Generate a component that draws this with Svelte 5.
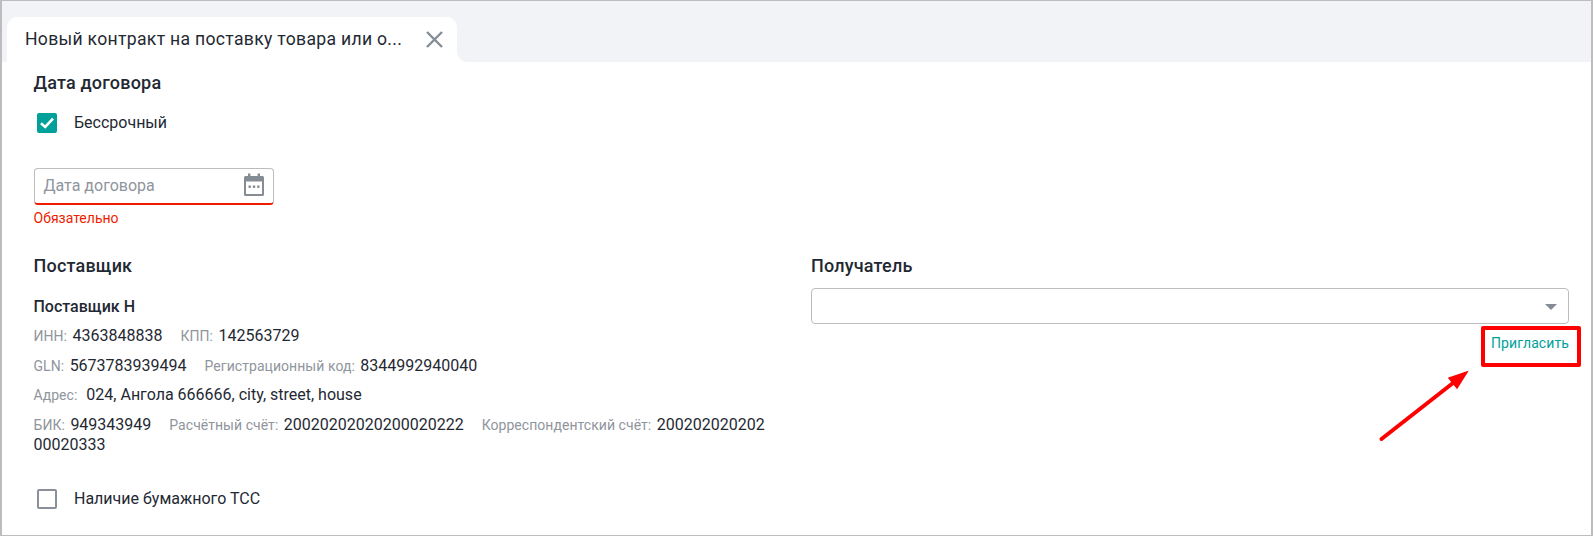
<script lang="ts">
	// Static recreation of the contract form
	const supplierRows = [
		[['ИНН:', '4363848838'], ['КПП:', '142563729']],
		[['GLN:', '5673783939494'], ['Регистрационный код:', '8344992940040']]
	];
</script>

<div class="frame">
	<div class="tabs">
		<div class="tab">
			<span class="tab-title">Новый контракт на поставку товара или о...</span>
			<svg class="close" width="17" height="17" viewBox="0 0 17 17" aria-hidden="true">
				<path d="M1 1 L16 16 M16 1 L1 16" stroke="#858d96" stroke-width="2.4" fill="none" />
			</svg>
		</div>
		<div class="tab-rest"></div>
	</div>

	<div class="content">
		<h3>Дата договора</h3>
		<label class="check term">
			<span class="box checked">
				<svg width="14" height="12" viewBox="0 0 14 12" aria-hidden="true">
					<path d="M1 6.2 L5.2 10 L13 1.6" stroke="#fff" stroke-width="2.6" fill="none" />
				</svg>
			</span>
			Бессрочный
		</label>

		<div class="date-input">
			<span class="placeholder">Дата договора</span>
			<svg width="22" height="24" viewBox="0 0 22 24" aria-hidden="true">
				<path d="M5 0.5h2.4v2.5h7.2V0.5H17v2.5h2.5A1.5 1.5 0 0 1 21 4.5v17a1.5 1.5 0 0 1-1.5 1.5h-17A1.5 1.5 0 0 1 1 21.5v-17A1.5 1.5 0 0 1 2.5 3H5z" fill="#868c94" />
				<rect x="3" y="8.5" width="16" height="12.5" fill="#fff" />
				<rect x="5.5" y="12.5" width="2.4" height="2.4" fill="#868c94" />
				<rect x="9.8" y="12.5" width="2.4" height="2.4" fill="#868c94" />
				<rect x="14.1" y="12.5" width="2.4" height="2.4" fill="#868c94" />
			</svg>
		</div>
		<div class="error">Обязательно</div>

		<div class="columns">
			<section>
				<h3>Поставщик</h3>
				<div class="supplier-name">Поставщик Н</div>
				{#each supplierRows as row}
					<div class="info-row">
						{#each row as [label, value]}
							<span class="pair"><span class="label">{label}</span> {value}</span>
						{/each}
					</div>
				{/each}
				<div class="info-row">
					<span class="pair"><span class="label address">Адрес:</span> 024, Ангола 666666, city, street, house</span>
				</div>
				<div class="info-row bank">
					<span class="pair"><span class="label">БИК:</span> 949343949</span>
					<span class="pair"><span class="label">Расчётный счёт:</span> 20020202020200020222</span>
					<span class="pair"><span class="label">Корреспондентский счёт:</span> <span class="long">20020202020200020333</span></span>
				</div>
			</section>
			<section>
				<h3>Получатель</h3>
				<div class="select"><span class="caret"></span></div>
				<div class="invite-row">
					<a class="invite" href="#invite">Пригласить</a>
				</div>
			</section>
		</div>

		<label class="check paper">
			<span class="box"></span>
			Наличие бумажного ТСС
		</label>
	</div>

	<!-- red annotation drawn over the screenshot -->
	<svg class="arrow" width="95" height="80" viewBox="0 0 95 80" aria-hidden="true">
		<path d="M3.5 70 L75 14" stroke="#fe0000" stroke-width="4" stroke-linecap="round" fill="none" />
		<path d="M89 3 L71 9 L79 19 Z" fill="#fe0000" stroke="#fe0000" stroke-width="1.5" />
	</svg>
</div>

<style>
	:global(body) {
		margin: 0;
		background: #fff;
	}

	.frame {
		position: relative;
		box-sizing: border-box;
		width: 1593px;
		height: 536px;
		border: 1px solid #bdbdbd;
		border-left-width: 2px;
		border-right-width: 2px;
		overflow: hidden;
		font-family: Roboto, "Liberation Sans", sans-serif;
		color: #1f2933;
	}

	.tabs {
		display: flex;
		box-sizing: border-box;
		height: 61px;
		padding: 16px 0 0 5px;
		background: #f2f3f7;
	}

	.tab {
		display: flex;
		align-items: flex-start;
		justify-content: space-between;
		box-sizing: border-box;
		width: 450px;
		height: 45px;
		padding: 12px 14px 0 18px;
		background: #fff;
		border-radius: 10px 10px 0 0;
	}

	.tab-title {
		font-size: 17.6px;
		line-height: 20px;
		letter-spacing: 0.3px;
		white-space: nowrap;
	}

	.close {
		margin-top: 2px;
	}

	.tab-rest {
		flex: 1;
		position: relative;
		background: #f2f3f7;
	}

	.tab-rest::before {
		content: "";
		position: absolute;
		left: 0;
		bottom: 0;
		width: 12px;
		height: 12px;
		background: #fff;
	}

	.tab-rest::after {
		content: "";
		position: absolute;
		left: 0;
		bottom: 0;
		width: 12px;
		height: 12px;
		background: #f2f3f7;
		border-bottom-left-radius: 10px;
	}

	.content {
		padding: 9px 22px 0 31.5px;
	}

	h3 {
		margin: 0;
		font-size: 18px;
		line-height: 24px;
		font-weight: 500;
		letter-spacing: 0.2px;
	}

	.check {
		display: flex;
		align-items: center;
		gap: 17px;
		font-size: 16px;
		line-height: 24px;
		padding-left: 3.5px;
	}

	.term {
		margin-top: 16px;
	}

	.box {
		display: flex;
		align-items: center;
		justify-content: center;
		box-sizing: border-box;
		width: 20px;
		height: 20px;
		border: 2px solid #8a9099;
		border-radius: 2px;
	}

	.box.checked {
		background: #00a19a;
		border-color: #00a19a;
	}

	.date-input {
		display: flex;
		align-items: center;
		justify-content: space-between;
		box-sizing: border-box;
		width: 240px;
		height: 37px;
		margin-top: 33px;
		padding: 0 8px 2px 9px;
		border: 1px solid #bdbdbd;
		border-bottom: 2px solid #ee1c00;
		border-radius: 4px;
	}

	.placeholder {
		font-size: 16px;
		color: #8f959c;
	}

	.error {
		margin-top: 5px;
		font-size: 14px;
		line-height: 16px;
		color: #ee1c00;
	}

	.columns {
		display: grid;
		grid-template-columns: 738px 1fr;
		column-gap: 39.5px;
		margin-top: 28px;
	}

	.supplier-name {
		margin-top: 19px;
		font-size: 16px;
		line-height: 20px;
		font-weight: 500;
	}

	.info-row {
		display: flex;
		flex-wrap: wrap;
		column-gap: 18px;
		margin-top: 9px;
		font-size: 16px;
		line-height: 20px;
	}

	.info-row + .info-row {
		margin-top: 9.5px;
	}

	.info-row.bank {
		display: block;
	}

	.bank .pair {
		margin-right: 14px;
	}

	.bank .pair:last-child {
		margin-right: 0;
	}

	.long {
		word-break: break-all;
	}

	.label {
		margin-right: 1.5px;
		font-size: 14px;
		letter-spacing: 0.05px;
		color: #8f959c;
	}

	.label.address {
		margin-right: 5px;
	}

	.select {
		position: relative;
		box-sizing: border-box;
		height: 36px;
		margin-top: 10px;
		border: 1px solid #bdbdbd;
		border-radius: 4px;
	}

	.caret {
		position: absolute;
		right: 11px;
		top: 15px;
		border-left: 6px solid transparent;
		border-right: 6px solid transparent;
		border-top: 6px solid #868c94;
	}

	.invite-row {
		display: flex;
		justify-content: flex-end;
		margin-top: 10px;
	}

	.invite {
		position: relative;
		font-size: 14px;
		line-height: 18px;
		letter-spacing: 0.1px;
		color: #00a19a;
		text-decoration: none;
	}

	.invite::after {
		content: "";
		position: absolute;
		left: -10px;
		right: -12px;
		top: -8px;
		bottom: -15px;
		border: 4px solid #fe0000;
		border-radius: 2px;
	}

	.paper {
		margin-top: 32px;
	}

	.arrow {
		position: absolute;
		left: 1376px;
		top: 368px;
	}
</style>
